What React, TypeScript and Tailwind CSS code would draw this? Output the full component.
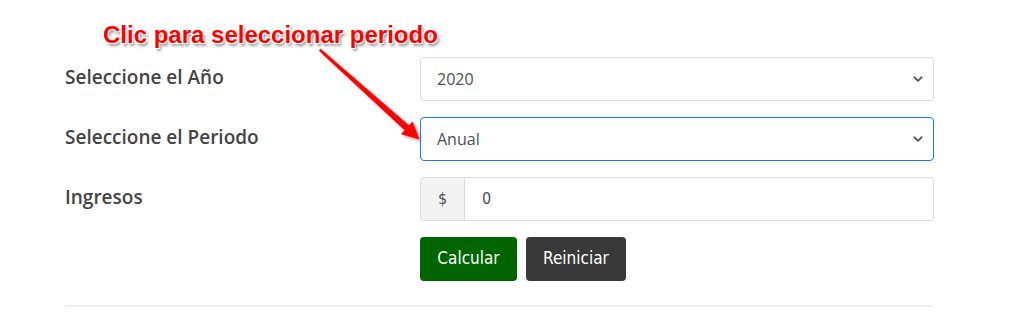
import React from 'react';

const Chevron = () => (
  <svg width="12" height="12" viewBox="0 0 16 16" className="text-[#4a4a4a]">
    <path d="M3 5.5l5 5 5-5" fill="none" stroke="currentColor" strokeWidth="2" strokeLinecap="round" strokeLinejoin="round" />
  </svg>
);

const SelectBox = ({ value, focused }: { value: string; focused?: boolean }) => (
  <div
    className={`flex h-[44px] items-center justify-between rounded border bg-white pl-[16px] pr-[9px] ${
      focused ? 'border-[#1a7cf0]' : 'border-[#dcdcdc]'
    }`}
  >
    <span className="text-[16px] text-[#495057]">{value}</span>
    <Chevron />
  </div>
);

const Row = ({ label, children }: { label: string; children: React.ReactNode }) => (
  <div className="flex">
    <div className="w-[355px] pt-[6px] text-[19px] font-semibold leading-[28px] text-[#444]">{label}</div>
    <div className="w-[514px]">{children}</div>
  </div>
);

const narrow = "font-['DejaVu_Sans_Condensed','Liberation_Sans_Narrow',sans-serif]";

export default function App() {
  return (
    <div className="relative h-[323px] w-[1012px] overflow-hidden bg-white font-['Open_Sans',sans-serif]">
      <div className="flex flex-col gap-[16px] pl-[65px] pt-[57px]">
        <Row label="Seleccione el Año">
          <SelectBox value="2020" />
        </Row>
        <Row label="Seleccione el Periodo">
          <SelectBox value="Anual" focused />
        </Row>
        <Row label="Ingresos">
          <div className={`flex h-[44px] rounded border border-[#dcdcdc] bg-white text-[16px] text-[#495057] ${narrow}`}>
            <div className="flex w-[44px] items-center justify-center rounded-l border-r border-[#dcdcdc] bg-[#f3f3f3]">
              $
            </div>
            <div className="flex items-center pl-[17px]">0</div>
          </div>
        </Row>
        <div className={`flex gap-[9px] pl-[355px] text-[17px] text-white ${narrow}`}>
          <button className="h-[44px] w-[97px] rounded bg-[#006400]">Calcular</button>
          <button className="h-[44px] w-[100px] rounded bg-[#393939]">Reiniciar</button>
        </div>
        <div className="mt-[8px] h-[2px] w-[868px] bg-[#f0f0f0]" />
      </div>

      <div
        className="absolute left-[103px] top-[17px] font-['Liberation_Sans',Arial,sans-serif] text-[24px] font-bold text-[#ff0000]"
        style={{ textShadow: '1px 1px 0 #fff, -1px -1px 0 #fff, 1px -1px 0 #fff, -1px 1px 0 #fff, 2px 3px 3px rgba(0,0,0,0.45)' }}
      >
        Clic para seleccionar periodo
      </div>

      <svg className="absolute left-0 top-0" width="1012" height="323" viewBox="0 0 1012 323">
        <defs>
          <filter id="sh" x="-20%" y="-20%" width="140%" height="140%">
            <feDropShadow dx="2" dy="2" stdDeviation="1.5" floodColor="#000" floodOpacity="0.35" />
          </filter>
        </defs>
        <g filter="url(#sh)">
          <path
            d="M320.7 49.3 L409 125.8 L412.4 122 L419 139 L401.6 134 L405 130.2 L319.3 50.7 Z"
            fill="#ff0000"
            stroke="#ff0000"
            strokeWidth="0.8"
            strokeLinejoin="round"
          />
        </g>
      </svg>
    </div>
  );
}
